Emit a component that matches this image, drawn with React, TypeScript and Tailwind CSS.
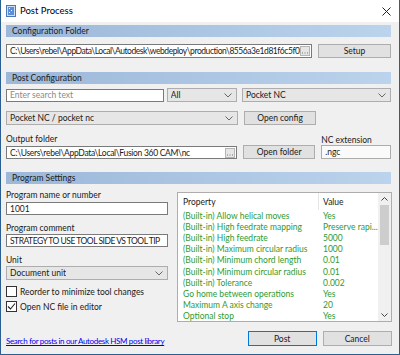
import React from 'react';

const rows: [string, string][] = [
  ['(Built-in) Allow helical moves', 'Yes'],
  ['(Built-in) High feedrate mapping', 'Preserve rapi...'],
  ['(Built-in) High feedrate', '5000'],
  ['(Built-in) Maximum circular radius', '1000'],
  ['(Built-in) Minimum chord length', '0.01'],
  ['(Built-in) Minimum circular radius', '0.01'],
  ['(Built-in) Tolerance', '0.002'],
  ['Go home between operations', 'Yes'],
  ['Maximum A axis change', '20'],
  ['Optional stop', 'Yes'],
];

const Chevron = () => (
  <svg width="8" height="5" viewBox="0 0 8 5" className="shrink-0">
    <path d="M0.5 0.5 L4 4 L7.5 0.5" fill="none" stroke="#666" strokeWidth="1" />
  </svg>
);

const Header = ({ title }: { title: string }) => (
  <div className="h-[12px] flex items-center pl-[6px] bg-gradient-to-r from-[#9cb7d9] to-[#bbd3ec] text-[#1b1b1b]">
    {title}
  </div>
);

const Select = ({ label, w }: { label: string; w: string }) => (
  <div className={`${w} h-[14px] flex items-center justify-between pl-[3px] pr-[4px] bg-[#e6e6e6] border border-[#adadad]`}>
    <span className="truncate">{label}</span>
    <Chevron />
  </div>
);

const Button = ({ label, w, h = 'h-[14px]', primary }: { label: string; w: string; h?: string; primary?: boolean }) => (
  <div
    className={`${w} ${h} flex items-center justify-center bg-[#e1e1e1] ${
      primary ? 'border border-[#0078d7]' : 'border border-[#adadad]'
    }`}
  >
    {label}
  </div>
);

// small browse button drawn inside the path fields
const Dots = () => (
  <div className="w-[10px] h-[10px] border border-[#b5b5b5] bg-[#e6e6e6] flex items-end justify-center pb-[1px] shrink-0">
    <svg width="6" height="2" viewBox="0 0 6 2">
      <rect x="0" y="0.5" width="1" height="1" fill="#777" />
      <rect x="2.5" y="0.5" width="1" height="1" fill="#777" />
      <rect x="5" y="0.5" width="1" height="1" fill="#777" />
    </svg>
  </div>
);

const Check = ({ checked, label }: { checked?: boolean; label: string }) => (
  <div className="flex items-center gap-[3px]">
    <div className="w-[11px] h-[11px] border border-[#333] bg-white flex items-center justify-center">
      {checked && (
        <svg width="9" height="9" viewBox="0 0 9 9">
          <path d="M1 4.5 L3.5 7 L8 1.5" fill="none" stroke="#222" strokeWidth="1.1" />
        </svg>
      )}
    </div>
    <span>{label}</span>
  </div>
);

export default function App() {
  return (
    <div
      className="w-[400px] h-[355px] bg-[#f0f0f0] border-l border-r border-b border-[#2c5f91] flex flex-col text-[#1a1a1a] text-[8.5px] leading-[10px] overflow-hidden"
      style={{ fontFamily: 'Lato, "Noto Sans", sans-serif' }}
    >
      {/* title bar */}
      <div className="h-[22px] bg-white flex items-center pl-[5px] pr-[8px] shrink-0">
        <svg width="10" height="12" viewBox="0 0 10 12" className="mr-[4px]">
          <rect x="0.5" y="0.5" width="9" height="11" fill="#cfe0f5" stroke="#4a78b8" />
          <rect x="2" y="2" width="6" height="8" fill="#5d8fd6" />
          <rect x="3" y="3" width="1" height="1" fill="#fff" />
          <rect x="5" y="5" width="1" height="1" fill="#fff" />
          <rect x="3" y="7" width="1" height="1" fill="#fff" />
        </svg>
        <span className="text-[9.5px] text-black">Post Process</span>
        <svg width="9" height="9" viewBox="0 0 9 9" className="ml-auto">
          <path d="M0.5 0.5 L8.5 8.5 M8.5 0.5 L0.5 8.5" stroke="#222" strokeWidth="1" />
        </svg>
      </div>

      <div className="flex flex-col pl-[5px] pr-[8px] pt-[3px]">
        <Header title="Configuration Folder" />
        <div className="flex items-center mt-[7px] gap-[6px]">
          <div className="w-[306px] h-[14px] bg-white border border-[#7a7a7a] flex items-center pl-[3px] pr-[1px]">
            <span className="flex-1 overflow-hidden whitespace-nowrap tracking-[-0.45px]">
              C:\Users\rebel\AppData\Local\Autodesk\webdeploy\production\8556a3e1d81f6c5f0bca3f
            </span>
            <Dots />
          </div>
          <Button label="Setup" w="w-[73px]" />
        </div>

        <div className="mt-[14px]">
          <Header title="Post Configuration" />
        </div>
        <div className="flex items-center mt-[4px] gap-[3px]">
          <div className="w-[160px] h-[13px] bg-white border border-[#7a7a7a] flex items-center pl-[3px] text-[#8a8a8a]">
            Enter search text
          </div>
          <Select label="All" w="w-[71px]" />
          <div className="ml-[2px]">
            <Select label="Pocket NC" w="w-[149px]" />
          </div>
        </div>
        <div className="flex items-center mt-[9px] gap-[6px]">
          <Select label="Pocket NC / pocket nc" w="w-[232px]" />
          <Button label="Open config" w="w-[72px]" />
        </div>

        <div className="flex mt-[9px] gap-[6px]">
          <div className="flex flex-col w-[232px]">
            <span className="h-[10px]">Output folder</span>
            <div className="mt-[2px] h-[13px] bg-white border border-[#7a7a7a] flex items-center pl-[3px] pr-[1px]">
              <span className="flex-1 overflow-hidden whitespace-nowrap tracking-[-0.3px]">C:\Users\rebel\AppData\Local\Fusion 360 CAM\nc</span>
              <Dots />
            </div>
          </div>
          <div className="flex flex-col justify-end">
            <Button label="Open folder" w="w-[72px]" />
          </div>
          <div className="flex flex-col w-[70px]">
            <span className="h-[10px] mt-[1px]">NC extension</span>
            <div className="h-[14px] bg-[#fafafa] border border-[#adadad] flex items-center pl-[3px]">
              .ngc
            </div>
          </div>
        </div>

        <div className="mt-[13px]">
          <Header title="Program Settings" />
        </div>

        <div className="flex mt-[6px] gap-[9px]">
          <div className="w-[162px] flex flex-col">
            <span className="h-[10px]">Program name or number</span>
            <div className="mt-[2px] h-[13px] bg-white border border-[#7a7a7a] flex items-center pl-[3px]">1001</div>
            <span className="h-[10px] mt-[8px]">Program comment</span>
            <div className="mt-[1px] h-[13px] bg-white border border-[#7a7a7a] flex items-center pl-[3px] whitespace-nowrap overflow-hidden tracking-[-0.5px]">
              STRATEGY TO USE TOOL SIDE VS TOOL TIP
            </div>
            <span className="h-[10px] mt-[8px]">Unit</span>
            <div className="mt-[1px]">
              <Select label="Document unit" w="w-[162px]" />
            </div>
            <div className="mt-[6px]">
              <Check label="Reorder to minimize tool changes" />
            </div>
            <div className="mt-[4px]">
              <Check checked label="Open NC file in editor" />
            </div>
            <span className="mt-[24px] h-[10px] text-[8px] text-[#0000ee] underline whitespace-nowrap tracking-[-0.35px]">
              Search for posts in our Autodesk HSM post library
            </span>
          </div>

          <div className="flex-1 flex flex-col">
            <div className="mt-[2px] h-[130px] bg-white border border-[#adadad] flex">
              <div className="flex-1 flex flex-col min-w-0">
                <div className="h-[17px] flex items-center shrink-0">
                  <span className="w-[141px] pl-[5px] border-r border-[#e5e5e5] h-full flex items-center">Property</span>
                  <span className="pl-[4px]">Value</span>
                </div>
                {rows.map(([p, v]) => (
                  <div key={p} className="h-[11.2px] flex items-center text-[#2f9a2f] shrink-0 whitespace-nowrap">
                    <span className="w-[141px] pl-[5px] overflow-hidden">{p}</span>
                    <span className="pl-[4px] overflow-hidden">{v}</span>
                  </div>
                ))}
              </div>
              <div className="w-[13px] bg-[#f0f0f0] flex flex-col items-center shrink-0">
                <div className="h-[12px] flex items-center justify-center">
                  <svg width="7" height="4" viewBox="0 0 7 4">
                    <path d="M0.5 3.5 L3.5 0.5 L6.5 3.5" fill="none" stroke="#444" strokeWidth="1" />
                  </svg>
                </div>
                <div className="w-[9px] h-[40px] bg-[#cdcdcd]" />
                <div className="flex-1" />
                <div className="h-[12px] flex items-center justify-center">
                  <svg width="7" height="4" viewBox="0 0 7 4">
                    <path d="M0.5 0.5 L3.5 3.5 L6.5 0.5" fill="none" stroke="#444" strokeWidth="1" />
                  </svg>
                </div>
              </div>
            </div>
            <div className="flex justify-end gap-[6px] mt-[9px]">
              <Button label="Post" w="w-[69px]" h="h-[15px]" primary />
              <Button label="Cancel" w="w-[69px]" h="h-[15px]" />
            </div>
          </div>
        </div>
      </div>
    </div>
  );
}
